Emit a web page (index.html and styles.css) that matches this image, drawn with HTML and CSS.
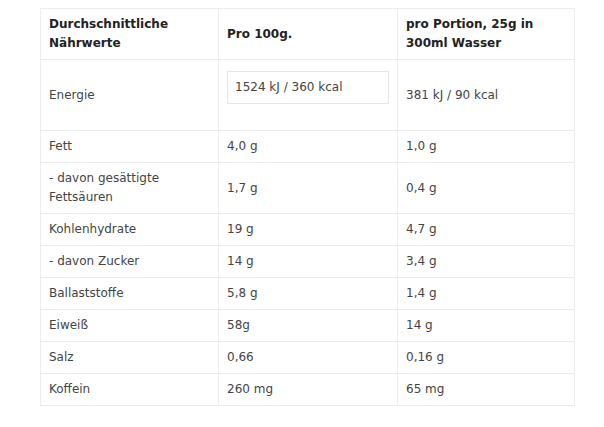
FILE: index.html
```html
<!DOCTYPE html>
<html lang="de">
<head>
<meta charset="utf-8">
<link rel="stylesheet" href="styles.css">
</head>
<body>
<table class="nutrition">
  <thead>
    <tr>
      <th class="c1">Durchschnittliche Nährwerte</th>
      <th class="c2">Pro 100g.</th>
      <th class="c3">pro Portion, 25g in 300ml Wasser</th>
    </tr>
  </thead>
  <tbody>
    <tr class="energy">
      <td>Energie</td>
      <td class="field-cell"><div class="field">1524 kJ / 360 kcal</div></td>
      <td>381 kJ / 90 kcal</td>
    </tr>
    <tr><td>Fett</td><td>4,0 g</td><td>1,0 g</td></tr>
    <tr><td>- davon gesättigte Fettsäuren</td><td>1,7 g</td><td>0,4 g</td></tr>
    <tr><td>Kohlenhydrate</td><td>19 g</td><td>4,7 g</td></tr>
    <tr><td>- davon Zucker</td><td>14 g</td><td>3,4 g</td></tr>
    <tr><td>Ballaststoffe</td><td>5,8 g</td><td>1,4 g</td></tr>
    <tr><td>Eiweiß</td><td>58g</td><td>14 g</td></tr>
    <tr><td>Salz</td><td>0,66</td><td>0,16 g</td></tr>
    <tr><td>Koffein</td><td>260 mg</td><td>65 mg</td></tr>
  </tbody>
</table>
</body>
</html>
```

FILE: styles.css
```css
html, body {
  margin: 0;
  padding: 0;
  background: #fff;
}
body {
  padding: 8px 0 0 40px;
  font-family: "DejaVu Sans", "Liberation Sans", sans-serif;
  font-size: 12px;
  color: #444;
}
.nutrition {
  border-collapse: collapse;
  width: 535px;
  table-layout: fixed;
}
.nutrition th,
.nutrition td {
  border: 1px solid #ececec;
  padding: 6px 8px;
  line-height: 19px;
  text-align: left;
  vertical-align: middle;
}
.nutrition th {
  font-weight: bold;
  color: #222;
  height: 38px;
}
.nutrition td {
  height: 19px;
}
.c1 { width: 161px; }
.c2 { width: 162px; }
.c3 { width: 160px; }
.nutrition .field-cell {
  vertical-align: top;
  padding-top: 11px;
  padding-bottom: 26px;
}
.field {
  border: 1px solid #e6e6e6;
  padding: 5px 7px;
  height: 21px;
  line-height: 21px;
}
```
